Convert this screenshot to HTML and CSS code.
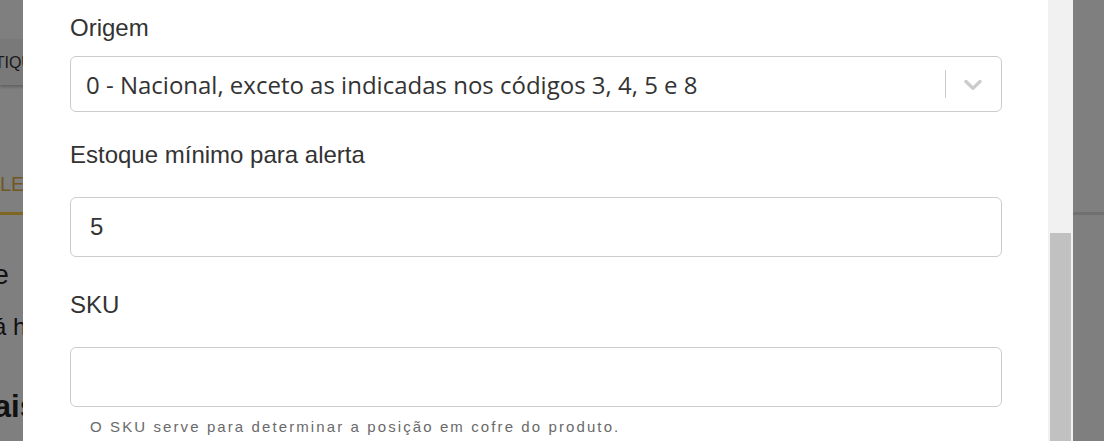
FILE: index.html
```html
<!DOCTYPE html>
<html lang="pt-BR">
<head>
<meta charset="utf-8">
<title>Produto</title>
<link rel="stylesheet" href="styles.css">
</head>
<body>
<div class="page">
  <div class="topbar"><span class="topbar-text">ETIQUETAS</span></div>
  <div class="tabs"><div class="tab active">LEILÕES</div></div>
  <div class="page-body">
    <div class="page-title">Estoque</div>
    <div class="page-text">Já há itens</div>
    <div class="page-sub">Mais</div>
  </div>
</div>

<div class="overlay">
  <div class="modal">
    <div class="field field-select">
      <label class="label">Origem</label>
      <div class="select">
        <span class="select-value">0 - Nacional, exceto as indicadas nos códigos 3, 4, 5 e 8</span>
        <span class="select-sep"></span>
        <span class="select-arrow">
          <svg width="30" height="30" viewBox="0 0 20 20" aria-hidden="true"><path d="M4.516 7.548c0.436-0.446 1.043-0.481 1.576 0l3.908 3.747 3.908-3.747c0.533-0.481 1.141-0.446 1.574 0 0.436 0.445 0.408 1.197 0 1.615-0.406 0.418-4.695 4.502-4.695 4.502-0.217 0.223-0.502 0.335-0.787 0.335s-0.57-0.112-0.789-0.335c0 0-4.287-4.084-4.695-4.502s-0.436-1.17 0-1.615z" fill="#cccccc"/></svg>
        </span>
      </div>
    </div>
    <div class="field field-stock">
      <label class="label">Estoque mínimo para alerta</label>
      <div class="input">5</div>
    </div>
    <div class="field field-sku">
      <label class="label">SKU</label>
      <div class="input"></div>
      <div class="help">O SKU serve para determinar a posição em cofre do produto.</div>
    </div>
  </div>
  <div class="scrollbar"><div class="thumb"></div></div>
</div>
</body>
</html>
```
FILE: styles.css
```css
html, body {
  margin: 0;
  padding: 0;
}
body {
  width: 1104px;
  height: 441px;
  overflow: hidden;
  background: #ffffff;
  font-family: "Liberation Sans", Arial, sans-serif;
  color: #333333;
}

/* background page */
.page {
  display: flex;
  flex-direction: column;
}
.topbar {
  margin-top: 39px;
  width: 400px;
  height: 46px;
  background: #f3f3f3;
  box-shadow: 0 2px 3px rgba(0, 0, 0, 0.25);
  display: flex;
  align-items: center;
  font-size: 16px;
  color: #333333;
  overflow: hidden;
}
.topbar-text {
  margin-left: -16px;
  padding-top: 2px;
}
.tabs {
  margin-top: 87px;
  border-bottom: 3px solid #e0e0e0;
  display: flex;
}
.tab {
  font-size: 20px;
  line-height: 24px;
  color: #e0b040;
  height: 43px;
  padding: 0 12px 0 0;
  border-bottom: 3px solid #ffce45;
  margin-bottom: -3px;
  box-sizing: border-box;
}
.page-body {
  display: flex;
  flex-direction: column;
  color: #222222;
  white-space: nowrap;
}
.page-title {
  margin-top: 44px;
  font-size: 28px;
  line-height: 32px;
  text-indent: -94px;
}
.page-text {
  margin-top: 22px;
  font-size: 24px;
  line-height: 28px;
  text-indent: -19px;
}
.page-sub {
  margin-top: 48px;
  font-size: 31px;
  line-height: 36px;
  font-weight: bold;
  text-indent: -32px;
}

/* overlay + modal */
.overlay {
  position: fixed;
  inset: 0;
  background: rgba(0, 0, 0, 0.5);
  display: flex;
  align-items: stretch;
}
.modal {
  margin-left: 23px;
  width: 1025px;
  box-sizing: border-box;
  background: #ffffff;
  padding: 14px 46px 0 47px;
  display: flex;
  flex-direction: column;
}
.scrollbar {
  width: 25px;
  box-sizing: border-box;
  background: #f1f1f1;
  padding: 233px 2px 0 2px;
  display: flex;
}
.thumb {
  flex: 1;
  background: #c1c1c1;
}

.field {
  display: flex;
  flex-direction: column;
}
.field-stock {
  margin-top: 29px;
}
.field-sku {
  margin-top: 34px;
}
.label {
  font-size: 24px;
  line-height: 28px;
  color: #333333;
}
.field-select .select {
  margin-top: 14px;
}
.select {
  height: 56px;
  box-sizing: border-box;
  border: 1px solid #cccccc;
  border-radius: 6px;
  display: flex;
  align-items: center;
  padding-left: 15px;
}
.select-value {
  flex: 1;
  font-family: "Open Sans", "Noto Sans", sans-serif;
  font-size: 24px;
  color: #333333;
  white-space: nowrap;
}
.select-sep {
  width: 1px;
  align-self: stretch;
  margin: 13px 0;
  background: #cccccc;
}
.select-arrow {
  display: flex;
  padding: 0 13px 0 12px;
}
.input {
  margin-top: 28px;
  height: 60px;
  box-sizing: border-box;
  border: 1px solid #cccccc;
  border-radius: 6px;
  padding-left: 19px;
  display: flex;
  align-items: center;
  font-size: 24px;
  color: #333333;
}
.help {
  margin-top: 11px;
  padding-left: 20px;
  font-size: 15px;
  line-height: 18px;
  letter-spacing: 2.1px;
  color: #6a6a6a;
  white-space: nowrap;
}
```
